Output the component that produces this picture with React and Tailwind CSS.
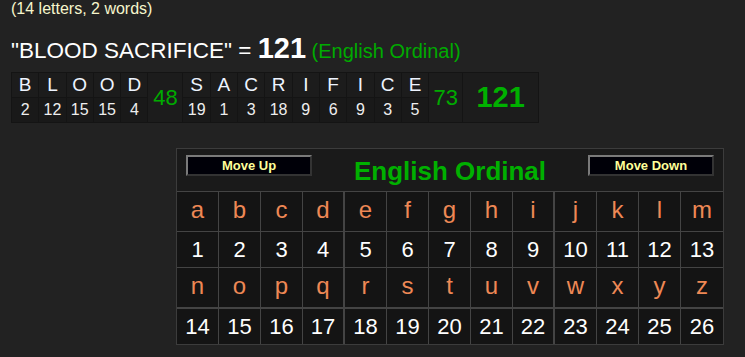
import React from 'react';

const word1 = [['B', 2], ['L', 12], ['O', 15], ['O', 15], ['D', 4]];
const word2 = [['S', 19], ['A', 1], ['C', 3], ['R', 18], ['I', 9], ['F', 6], ['I', 9], ['C', 3], ['E', 5]];

const letters = 'abcdefghijklmnopqrstuvwxyz'.split('');

function Cell({ children, className = '' }) {
  return (
    <div className={`bg-[#1c1c1c] flex items-center justify-center ${className}`}>
      {children}
    </div>
  );
}

function Breakdown() {
  // row 1 letters, row 2 values; the word totals span both rows
  return (
    <div className="mt-[4px] inline-grid grid-cols-[repeat(5,26.3px)_34px_repeat(9,26.3px)_33px_75px] grid-rows-[24px_24px] gap-px p-px bg-[#141414]">
      {word1.map(([l], i) => (
        <Cell key={'a' + i} className="text-[19px] text-[#eef4ff]">{l}</Cell>
      ))}
      <Cell className="row-span-2 text-[22px] text-[#00aa00]">48</Cell>
      {word2.map(([l], i) => (
        <Cell key={'b' + i} className="text-[19px] text-[#eef4ff]">{l}</Cell>
      ))}
      <Cell className="row-span-2 text-[22px] text-[#00aa00]">73</Cell>
      <Cell className="row-span-2 text-[29px] font-bold text-[#00b000]">121</Cell>
      {word1.map(([, v], i) => (
        <Cell key={'c' + i} className="bg-[#191919] text-[16px] text-[#eeeeee]">{v}</Cell>
      ))}
      {word2.map(([, v], i) => (
        <Cell key={'d' + i} className="bg-[#191919] text-[16px] text-[#eeeeee]">{v}</Cell>
      ))}
    </div>
  );
}

function MoveButton({ label }) {
  return (
    <button className="w-[126px] h-[21px] bg-[#000008] border-2 border-t-[#7a7a7a] border-l-[#7a7a7a] border-b-[#333333] border-r-[#333333] text-[13px] font-bold text-[#ffff99] leading-none">
      {label}
    </button>
  );
}

function Chart() {
  const rows = [letters.slice(0, 13), letters.slice(13)];
  return (
    <div className="mt-[25px] ml-[165px] w-[548px] border border-[#3c3c3c] bg-[#141414]">
      <div className="h-[43px] flex items-start justify-between px-[9px] pt-[6px] bg-[#1a1a1a] border-b border-[#444444]">
        <MoveButton label="Move Up" />
        <span className="text-[26px] leading-[30px] font-bold text-[#00b000] mt-[1px]">English Ordinal</span>
        <MoveButton label="Move Down" />
      </div>
      <div className="grid grid-cols-[repeat(13,1fr)]">
        {rows.map((row, r) => (
          <React.Fragment key={r}>
            {row.map((l, i) => (
              <div
                key={l}
                className={`flex items-center justify-center text-[24px] text-[#ee8855] border-[#444444] ${
                  r === 0 ? 'h-[40px] border-b' : 'h-[41px] border-b-2'
                } ${i === 12 ? '' : i === 3 || i === 8 ? 'border-r-2' : 'border-r'} pb-[3px]`}
              >
                {l}
              </div>
            ))}
            {row.map((l, i) => (
              <div
                key={l + 'n'}
                className={`flex items-center justify-center text-[22px] text-white border-[#444444] ${
                  r === 0 ? 'h-[36px] border-b' : 'h-[35px]'
                } ${i === 12 ? '' : i === 3 || i === 8 ? 'border-r-2' : 'border-r'}`}
              >
                {r * 13 + i + 1}
              </div>
            ))}
          </React.Fragment>
        ))}
      </div>
    </div>
  );
}

export default function App() {
  return (
    <div className="h-[357px] overflow-hidden bg-[#222222] px-[11px] font-['Liberation_Sans',Arial,sans-serif]">
      <div className="text-[16px] leading-[18px] text-[#f6f6cc]">(14 letters, 2 words)</div>
      <div className="mt-[15px] leading-[30px] text-white whitespace-nowrap">
        <span className="text-[22.5px]">"BLOOD SACRIFICE" = </span>
        <span className="text-[29px] font-bold">121</span>
        <span className="text-[20px] text-[#00aa00]"> (English Ordinal)</span>
      </div>
      <Breakdown />
      <Chart />
    </div>
  );
}
